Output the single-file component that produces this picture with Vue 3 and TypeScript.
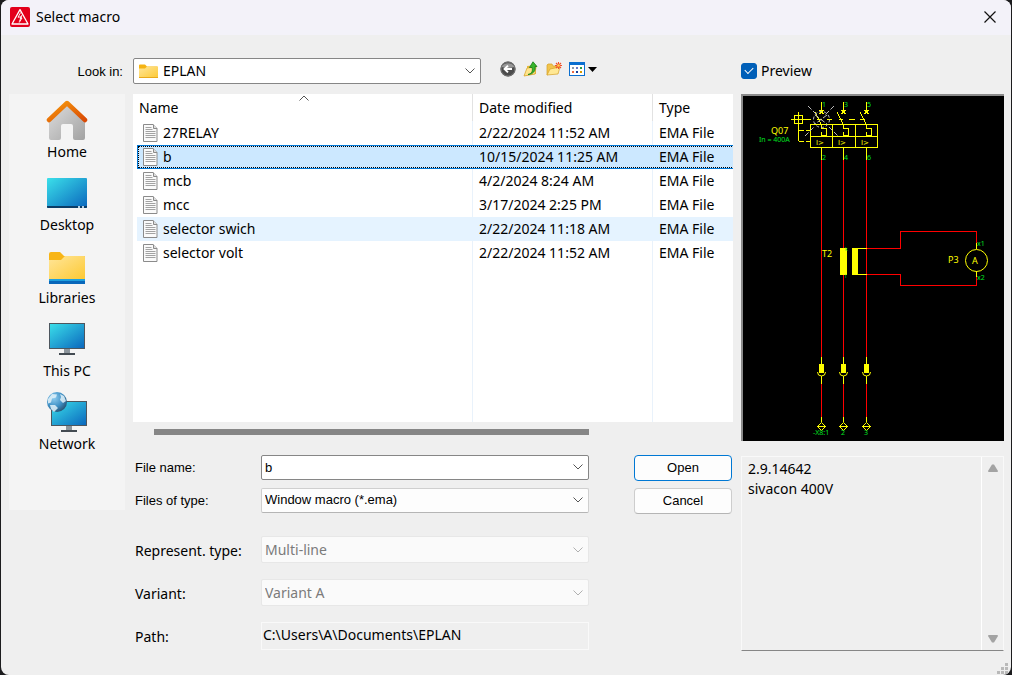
<script setup lang="ts">
import { ref } from 'vue'

interface MacroFile {
  name: string
  modified: string
  type: string
}

const files: MacroFile[] = [
  { name: '27RELAY', modified: '2/22/2024 11:52 AM', type: 'EMA File' },
  { name: 'b', modified: '10/15/2024 11:25 AM', type: 'EMA File' },
  { name: 'mcb', modified: '4/2/2024 8:24 AM', type: 'EMA File' },
  { name: 'mcc', modified: '3/17/2024 2:25 PM', type: 'EMA File' },
  { name: 'selector swich', modified: '2/22/2024 11:18 AM', type: 'EMA File' },
  { name: 'selector volt', modified: '2/22/2024 11:52 AM', type: 'EMA File' },
]
const places = ['Home', 'Desktop', 'Libraries', 'This PC', 'Network']
const poles = [
  { x: 821, top: '1', bottom: '2', terminal: '-X8:1', labelX: 813 },
  { x: 843, top: '3', bottom: '4', terminal: '2', labelX: 841 },
  { x: 866, top: '5', bottom: '6', terminal: '3', labelX: 864 },
]

const selected = ref('b')
const hovered = ref('selector swich')
const fileName = ref('b')
const path = ref('C:\\Users\\A\\Documents\\EPLAN')
const description = ref('2.9.14642\nsivacon 400V')
const showPreview = ref(true)

function pick(file: MacroFile) {
  selected.value = file.name
  fileName.value = file.name
}
</script>

<template>
  <main class="window">
    <header class="titlebar">
      <svg class="app-icon" viewBox="0 0 20 20" aria-hidden="true">
        <rect width="20" height="20" rx="2" fill="#e3001b" />
        <path d="M10 2.6 18 17H2Z" fill="none" stroke="#fff" stroke-width="1.3" stroke-linejoin="round" />
        <path d="M10.6 5.5 8 10.3l3.5-.6-2.2 4.8M12 8l-1.8 3.4 1.8-.4-2.8 4.6" fill="none" stroke="#fff" stroke-width=".9" />
      </svg>
      <h1>Select macro</h1>
      <button class="close" type="button" aria-label="Close">
        <svg viewBox="0 0 12 12" width="12" height="12"><path d="M.5.5l11 11M11.5.5l-11 11" stroke="#111" stroke-width="1.2" /></svg>
      </button>
    </header>

    <div class="body">
      <section class="browser">
        <div class="toolbar">
          <label class="small look-label" for="look">Look in:</label>
          <div class="combo look">
            <svg class="lead" width="19" height="15" viewBox="0 0 19 15" aria-hidden="true">
              <path d="M0 1.5Q0 .5 1 .5h5L8 2.5H18q1 0 1 1V6H0Z" fill="#f5b312" />
              <path d="M0 4.5h6l2-2h10q1 0 1 1V13q0 1-1 1H1q-1 0-1-1Z" fill="url(#folderFill)" />
              <path d="M0 13.5h19" stroke="#e9a91c" />
            </svg>
            <select id="look"><option>EPLAN</option></select>
            <svg class="chev" viewBox="0 0 10 6"><path d="M.5.5 5 5 9.5.5" /></svg>
          </div>
          <div class="tools">
            <button type="button" aria-label="Back">
              <svg width="16" height="16" viewBox="0 0 16 16">
                <circle cx="8" cy="8" r="7.6" fill="#4b4b4b" />
                <path d="M1.5 6a7 6 0 0 1 13 0Q8 8 1.5 6Z" fill="#979797" />
                <circle cx="8" cy="8" r="7" fill="none" stroke="#777" />
                <path d="M12 8H5M8 4.6 4.6 8 8 11.4" fill="none" stroke="#fff" stroke-width="2" />
              </svg>
            </button>
            <button type="button" aria-label="Up one level">
              <svg width="16" height="16" viewBox="0 0 16 16">
                <path d="M1 6V15l3-6V5l5-.5L13 4v9L1 15Z" fill="#e8b93c" />
                <path d="M1 15 4 7l9-1-1 7Z" fill="#ffe48a" stroke="#d6a125" stroke-width=".7" />
                <path d="M5 13.5c4-1 5-3.5 4-7H6.5L10 .8l4 4.7h-2c1 4-2 8-7 8Z" fill="#39b52c" stroke="#157d16" stroke-width=".8" />
              </svg>
            </button>
            <button type="button" aria-label="New folder">
              <svg width="16" height="16" viewBox="0 0 16 16">
                <path d="M1 14V4l1-1h4l1 2h5v3L1 14Z" fill="#f1c44d" stroke="#d6a125" stroke-width=".7" />
                <path d="M1 14 4 8l10-2-2 7Z" fill="#ffe894" stroke="#d6a125" stroke-width=".7" />
                <path d="M12.5 1v7M9 4.5h7M10 2l5 5M15 2l-5 5" stroke="#f0502a" stroke-width="1.1" />
                <circle cx="12.5" cy="4.5" r="1.3" fill="#ffd24a" />
              </svg>
            </button>
            <button class="view" type="button" aria-label="View menu">
              <svg width="16" height="14" viewBox="0 0 16 14">
                <rect x=".5" y=".5" width="15" height="13" fill="#fff" stroke="#0b6fd0" />
                <rect width="16" height="3" fill="#0b6fd0" />
                <path d="M3 5h2v2H3z" fill="#8b99a8" /><path d="M7 5h2v2H7z" fill="#6979c7" /><path d="M11 5h2v2h-2z" fill="#279a45" />
                <path d="M3 9h2v2H3z" fill="#ef6a42" /><path d="M7 9h2v2H7z" fill="#173f99" /><path d="M11 9h2v2h-2z" fill="#d79a00" />
              </svg>
              <svg width="9" height="5" viewBox="0 0 9 5"><path d="M0 0h9L4.5 5Z" fill="#000" /></svg>
            </button>
          </div>
        </div>

        <div class="columns">
          <nav class="places" aria-label="Places">
            <button v-for="place in places" :key="place" type="button" class="place">
              <svg width="42" height="42" viewBox="0 0 42 42" aria-hidden="true">
                <defs>
                  <linearGradient id="folderFill" x1="0" y1="0" x2="1" y2="1"><stop stop-color="#ffe69a" /><stop offset="1" stop-color="#fdc934" /></linearGradient>
                  <linearGradient id="screen" x1="0" y1="0" x2="1" y2="1"><stop stop-color="#3be0ea" /><stop offset="1" stop-color="#0a66bd" /></linearGradient>
                  <linearGradient id="roof" x1="0" y1="0" x2="1" y2="1"><stop stop-color="#f79a0c" /><stop offset="1" stop-color="#d94a05" /></linearGradient>
                  <linearGradient id="wall" x1="0" y1="0" x2="1" y2="1"><stop stop-color="#dedede" /><stop offset="1" stop-color="#a2a2a2" /></linearGradient>
                  <radialGradient id="globe" cx=".35" cy=".3" r=".75"><stop stop-color="#8fcdf0" /><stop offset=".6" stop-color="#3e8fc4" /><stop offset="1" stop-color="#28506f" /></radialGradient>
                </defs>
                <template v-if="place === 'Home'">
                  <path d="M3 18 21 4l18 14v20q0 2-2 2H29q-2 0-2-2V26q0-2-2-2h-8q-2 0-2 2v12q0 2-2 2H5q-2 0-2-2Z" fill="url(#wall)" />
                  <path d="M3 20 21 3 39 20" fill="none" stroke="url(#roof)" stroke-width="4.5" stroke-linecap="round" stroke-linejoin="round" />
                </template>
                <template v-else-if="place === 'Desktop'">
                  <rect x="1" y="5" width="40" height="30" rx="1" fill="url(#screen)" />
                  <path d="M1 33h40v1q0 1-1 1H2q-1 0-1-1Z" fill="#0b3c66" />
                  <path d="M32 33h2v2h-2zM36 33h2v2h-2z" fill="#b9d3e6" />
                </template>
                <template v-else-if="place === 'Libraries'">
                  <path d="M3 8q0-2 2-2h9l4 4h20q1 0 1 1v5H3Z" fill="#f8b516" />
                  <path d="M3 14h12l4-4h19q1 0 1 1v22H3Z" fill="url(#folderFill)" />
                  <path d="M3 33h36v2H3z" fill="#1fa0df" />
                  <path d="M3 35h36v3H3z" fill="#0967ba" />
                </template>
                <template v-else-if="place === 'This PC'">
                  <path d="M18 30h6v5h-6z" fill="#8c959c" />
                  <path d="M13 34h16v2H13z" fill="#434b52" />
                  <rect x="3.5" y="4.5" width="35" height="25" fill="url(#screen)" stroke="#4d565e" />
                </template>
                <template v-else>
                  <path d="M20 34h6v5h-6z" fill="#8c959c" />
                  <path d="M15 38h16v2H15z" fill="#434b52" />
                  <rect x="5.500" y="9.500" width="35" height="24" fill="url(#screen)" stroke="#4d565e" />
                  <circle cx="11" cy="10" r="10" fill="url(#globe)" />
                  <path d="M2 7 6 2l5 .5-1 3-4 1-1 4-3 1ZM14 2l4 2 2 5-3 2-3-3 1-3ZM4 13l5 0 3 3-4 4-3-3Z" fill="#e3f2f9" opacity=".85" />
                </template>
              </svg>
              <span>{{ place }}</span>
            </button>
          </nav>

          <div class="content">
            <div class="list">
              <table>
                <colgroup><col /><col class="c-date" /><col class="c-type" /></colgroup>
                <thead>
                  <tr>
                    <th scope="col" aria-sort="ascending">Name<svg class="sort" viewBox="0 0 10 6"><path d="M.5 5.500 5 1l4.500 4.500" /></svg></th>
                    <th scope="col">Date modified</th>
                    <th scope="col">Type</th>
                  </tr>
                </thead>
                <tbody>
                  <tr
                    v-for="file in files"
                    :key="file.name"
                    :class="{ selected: file.name === selected, hovered: file.name === hovered }"
                    @click="pick(file)"
                    @mouseenter="hovered = file.name"
                  >
                    <td>
                      <div class="file">
                        <svg width="15" height="18" viewBox="0 0 15 18" aria-hidden="true">
                          <path d="M.5.5H10L14 4.5V17.5H.5Z" fill="#fafafa" stroke="#8b8b8b" />
                          <path d="M10.5.5V4.5H14" fill="#ddd" stroke="#8b8b8b" />
                          <path d="M2.5 3.5h6M2.5 5.5h7M2.5 7.5h10M2.5 9.5h10M2.5 11.5h10M2.5 13.5h10" stroke="#a3a3a3" />
                        </svg>
                        {{ file.name }}
                      </div>
                    </td>
                    <td>{{ file.modified }}</td>
                    <td>{{ file.type }}</td>
                  </tr>
                  <tr class="filler" aria-hidden="true"><td></td><td></td><td></td></tr>
                </tbody>
              </table>
            </div>
            <div class="hscroll"></div>

            <form class="form" @submit.prevent>
              <label class="small" for="fname">File name:</label>
              <div class="combo small">
                <input id="fname" v-model="fileName" type="text" />
                <svg class="chev" viewBox="0 0 10 6"><path d="M.5.5 5 5 9.5.5" /></svg>
              </div>
              <button class="action primary" type="submit">Open</button>

              <label class="small" for="ftype">Files of type:</label>
              <div class="combo small soft">
                <select id="ftype"><option>Window macro (*.ema)</option></select>
                <svg class="chev" viewBox="0 0 10 6"><path d="M.5.5 5 5 9.5.5" /></svg>
              </div>
              <button class="action" type="button">Cancel</button>

              <label class="apart" for="rep">Represent. type:</label>
              <div class="combo off apart">
                <select id="rep" disabled><option>Multi-line</option></select>
                <svg class="chev" viewBox="0 0 10 6"><path d="M.5.5 5 5 9.5.5" /></svg>
              </div>

              <label class="apart" for="variant">Variant:</label>
              <div class="combo off apart">
                <select id="variant" disabled><option>Variant A</option></select>
                <svg class="chev" viewBox="0 0 10 6"><path d="M.5.5 5 5 9.5.5" /></svg>
              </div>

              <label class="apart" for="path">Path:</label>
              <input id="path" class="path apart" type="text" readonly :value="path" />
            </form>
          </div>
        </div>
      </section>

      <aside class="side">
        <label class="check"><input v-model="showPreview" type="checkbox" /><span>Preview</span></label>
        <div class="canvas">
          <svg v-show="showPreview" viewBox="743 96 261 345" role="img" aria-label="Macro preview">
            <g fill="none" stroke="#f00" shape-rendering="crispEdges">
              <path d="M867 248.5H900.5V231.5H976.5V243M867 274.5H900.5V285.5H976.5V277" />
              <path v-for="p in poles" :key="p.x" :d="`M${p.x + 0.5} 160V357M${p.x + 0.5} 384V417`" />
            </g>
            <g fill="none" stroke="#ff0" shape-rendering="crispEdges">
              <path d="M810.5 124.5H877.5V147.5H810.5ZM810.5 136.5H877.5M832.5 124V147M855.5 124V147" />
              <path d="M794.5 115.5h8v8h-8zM791 119.5h20M798.5 112v29" />
              <path d="M798.5 130.5h5M806 130.5h4M798.5 141.5h5M806 141.5h4M817 119.5h5M827 119.5h5M839 119.5h4M849 119.5h6M860 119.5h5" />
              <path d="M858 248.5h9M858 274.5h9M976.5 243v6M976.5 271v6" />
              <circle cx="976.5" cy="260.5" r="11" shape-rendering="auto" />
              <g v-for="p in poles" :key="p.x">
                <path :d="`M${p.x + 0.5} 102v10m-2 -2l4 4m0 -4l-4 4M${p.x - 6} 112l6 12M${p.x + 0.5} 124v4h5v7h-5v-3M${p.x + 0.5} 148v12`" />
                <path :d="`M${p.x + 0.5} 357v7M${p.x - 3.5} 372q0 4 4 4t4 -4M${p.x + 0.5} 376v8M${p.x + 0.5} 417v5M${p.x - 3.5} 426.5l4 -4 4 4 -4 4zM${p.x - 4} 426.5h9`" shape-rendering="auto" />
              </g>
            </g>
            <g fill="#ff0">
              <path d="M840 248h7v27h-7zM852 248h6v27h-6z" />
              <path v-for="p in poles" :key="p.x" :d="`M${p.x - 2} 364h5v9h-5z`" />
            </g>
            <g fill="none" stroke="#bbb">
              <path d="M808 106l9 9M834 106l-9 9M805 136l9-9M829 127l9 9M815 115l12 9M827 115l-12 9" stroke-dasharray="5 2" />
              <circle cx="821.5" cy="119.5" r="8" stroke-dasharray="3 2" />
            </g>
            <g class="tags" fill="#ff0">
              <text x="771" y="134" font-size="9">Q07</text>
              <text x="822" y="257" font-size="9">T2</text>
              <text x="948" y="263" font-size="9">P3</text>
              <text x="972" y="264" font-size="9">A</text>
              <text v-for="p in poles" :key="p.x" class="trip" :x="p.x - 5" y="145" font-size="7">I&gt;</text>
            </g>
            <g class="tags" fill="#00e020" font-size="7">
              <text x="759" y="142">In = 400A</text>
              <text x="977" y="246">x1</text>
              <text x="977" y="280">x2</text>
              <text x="845" y="251" font-size="5">k</text>
              <text x="845" y="278" font-size="5">l</text>
              <template v-for="p in poles" :key="p.x">
                <text :x="p.x + 1" y="107">{{ p.top }}</text>
                <text :x="p.x + 1" y="160">{{ p.bottom }}</text>
                <text :x="p.labelX" y="435">{{ p.terminal }}</text>
              </template>
            </g>
          </svg>
        </div>
        <div class="notes">
          <textarea aria-label="Description" readonly :value="description"></textarea>
          <div class="vscroll">
            <button type="button" aria-label="Scroll up"><svg width="10" height="8" viewBox="0 0 10 8"><path d="M0 7 4 .5h2L10 7l-.5 1h-9Z" /></svg></button>
            <button type="button" aria-label="Scroll down"><svg width="10" height="8" viewBox="0 0 10 8"><path d="M0 1 4 7.5h2L10 1 9.5 0h-9Z" /></svg></button>
          </div>
        </div>
      </aside>
    </div>
    <svg class="grip" width="11" height="11" viewBox="0 0 11 11" aria-hidden="true">
      <path d="M8 0h3v3H8zM4 4h3v3H4zM8 4h3v3H8zM0 8h3v3H0zM4 8h3v3H4zM8 8h3v3H8z" fill="#b9b9b9" />
    </svg>
  </main>
</template>

<style>
html, body { background: #1c1c1e; }
body { margin: 0; }
</style>

<style scoped>
*, *::before, *::after { box-sizing: border-box; }
.window {
  position: relative;
  min-height: 100vh;
  margin: 0 1px;
  background: #efefef;
  border-radius: 8px;
  overflow: hidden;
  color: #000;
  font: 14px/20px "Noto Sans", "Open Sans", sans-serif;
}
button, input, select, textarea { font: inherit; color: inherit; margin: 0; }
button { padding: 0; border: 0; background: none; }
svg { display: block; flex: none; }
.small { font: 13px/20px "Liberation Sans", Arial, sans-serif; }

.titlebar { display: flex; align-items: center; gap: 6px; height: 35px; padding: 0 8px 2px 9px; background: #f3f2f9; }
.titlebar h1 { flex: 1; margin: 0; font-size: 14px; font-weight: 400; }
.app-icon { width: 20px; height: 20px; }
.close { display: grid; place-items: center; width: 26px; height: 26px; }

.body { display: flex; gap: 8px; padding: 23px 7px 24px 8px; }
.browser { flex: 1; min-width: 0; }
.toolbar { display: flex; align-items: center; margin-bottom: 10px; }
.look-label { width: 124px; padding: 2px 10px 0 0; text-align: right; }
.tools { display: flex; align-items: center; gap: 7px; margin: 0 0 4px 19px; }
.view { display: flex; align-items: center; gap: 3px; }

.combo { position: relative; height: 26px; }
.combo select, .combo input {
  display: block;
  width: 100%;
  height: 100%;
  padding: 0 24px 0 3px;
  border: 1px solid #868686;
  border-radius: 2px;
  background: #fff;
  appearance: none;
  outline: 0;
  opacity: 1;
}
.chev { position: absolute; right: 6px; top: 50%; width: 10px; height: 6px; margin-top: -3px; pointer-events: none; }
.chev path, .sort path { fill: none; stroke: #555; }
.look { flex: 0 1 348px; }
.look select { padding-left: 29px; }
.lead { position: absolute; left: 6px; top: 6px; pointer-events: none; }
.soft select { border-color: #cfcfcf; border-bottom-color: #b5b5b5; background: #fdfdfd; }
.off { height: 27px; }
.off select { border-color: #e7e7e7; background: #fafafa; color: #7b7b7b; }
.off .chev path { stroke: #b0b0b0; }

.columns { display: flex; align-items: flex-start; gap: 8px; }
.places { flex: 0 0 116px; min-height: 416px; background: #f4f4f4; }
.place { display: flex; flex-direction: column; align-items: center; width: 100%; height: 73px; padding-top: 6px; }
.content { flex: 1; min-width: 0; }

.list { min-height: 328px; padding-left: 4px; background: #fff; overflow: hidden; }
table { width: calc(100% + 4px); height: 328px; table-layout: fixed; border-spacing: 0; }
.c-date { width: 180px; }
.c-type { width: 84px; }
th { position: relative; height: 27px; padding: 0 0 0 6px; border-right: 1px solid #e2e2e2; font-weight: 400; text-align: left; }
th:first-child { padding-left: 2px; }
td { height: 24px; padding: 0 0 0 6px; border-right: 1px solid #e9f2fb; white-space: nowrap; }
.sort { position: absolute; left: 50%; top: 1px; width: 10px; height: 6px; margin-left: -6px; }
.file { display: flex; align-items: center; gap: 5px; }
.hovered td { background: #e5f3ff; border-right-color: #e5f3ff; }
.selected { box-shadow: inset 0 0 0 1px #0078d7; outline: 1px dotted #000; outline-offset: -2px; background: #cce8ff; }
.selected td { border-right-color: transparent; }
.filler td { height: auto; }
.hscroll { height: 6px; margin: 7px 144px 19px 21px; background: #868686; }

.form { display: grid; grid-template-columns: 126px minmax(0, 1fr) 98px; padding: 0 1px 0 2px; align-items: center; }
.form > * { grid-column: 2; margin-right: 45px; }
.form > label { grid-column: 1; margin-right: 0; padding-top: 2px; }
.form > .action { grid-column: 3; margin: 1px 0 6px; }
.form > .small { margin-bottom: 7px; }
.form > .combo.small { height: 25px; }
.form > .apart { margin-top: 16px; }
.action { height: 26px; border: 1px solid #cdcdcd; border-bottom-color: #b5b5b5; border-radius: 4px; background: #fdfdfd; font: 13px/20px "Liberation Sans", Arial, sans-serif; }
.primary { border-color: #0078d4; }
.path { width: calc(100% - 45px); height: 28px; padding: 0 1px 4px; border: 1px solid #f9f9f9; background: #efefef; outline: 0; }

.side { flex: 0 0 263px; }
.check { display: flex; align-items: center; gap: 4px; height: 26px; margin-bottom: 10px; }
.check input { position: relative; width: 16px; height: 16px; margin: 0; border-radius: 3px; appearance: none; border: 1px solid #777; background: #fff; }
.check input:checked { border-color: #005fb8; background: #005fb8; }
.check input:checked::after { content: ""; position: absolute; left: 3px; top: 3px; width: 8px; height: 5px; border: solid #fff; border-width: 0 0 1px 1px; transform: rotate(-45deg); }
.canvas { min-height: 347px; border: solid #8b8b8b; border-width: 2px 0 0 2px; background: #000; }
.canvas svg { width: 100%; height: 345px; }
.tags { font-family: "Noto Sans", sans-serif; }
.trip { font-family: "DejaVu Sans", sans-serif; }
.notes { display: flex; height: 195px; margin-top: 15px; border: 1px solid #f9f9f9; border-bottom-color: #868686; }
.notes textarea { flex: 1; min-width: 0; padding: 2px 6px; border: 0; background: none; resize: none; outline: 0; }
.vscroll { display: flex; flex-direction: column; justify-content: space-between; width: 22px; padding: 7px 0; border-left: 1px solid #fff; }
.vscroll button { display: grid; place-items: center; }
.vscroll path { fill: #a3a3a3; }
.grip { position: absolute; right: 3px; bottom: 1px; }
</style>
